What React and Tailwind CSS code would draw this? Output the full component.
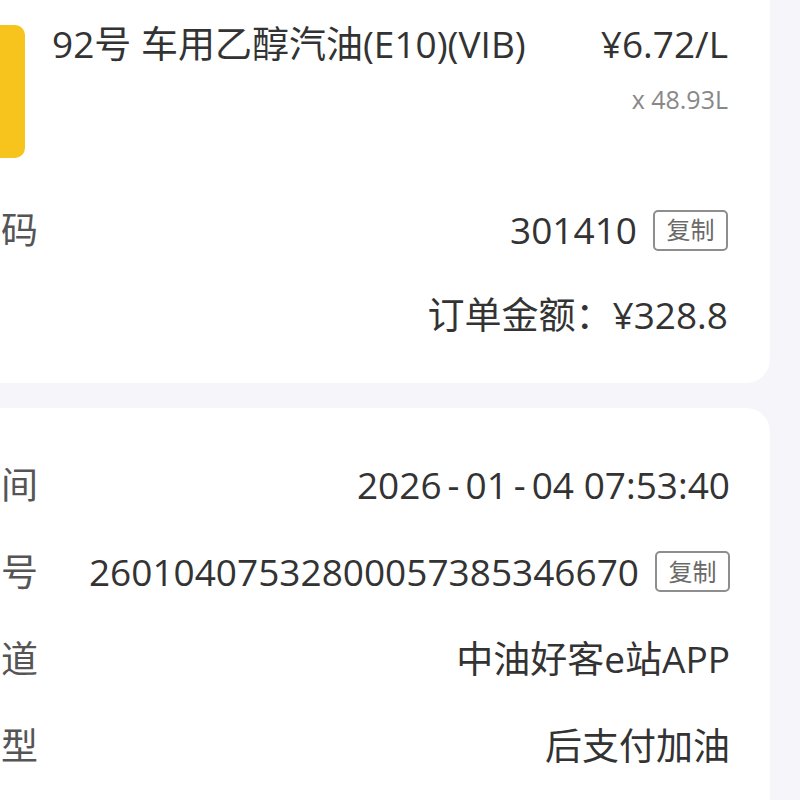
import React from "react";

function CopyBtn() {
  return (
    <span className="ml-[16px] inline-flex h-[41px] w-[75px] items-center justify-center rounded-[5px] border-2 border-[#8e8e8e] text-[24px] leading-none text-[#6a6a6a]">
      复制
    </span>
  );
}

function Row({ label, children, h = "h-[87px]" }) {
  return (
    <div className={`flex ${h} items-center justify-between`}>
      <span className="text-[#555]">{label}</span>
      <div className="flex items-center text-[#333]">{children}</div>
    </div>
  );
}

export default function App() {
  return (
    <div
      className="h-[800px] w-[800px] overflow-hidden bg-[#f6f6fa] font-normal"
      style={{ fontFamily: '"Open Sans", "Noto Sans CJK SC", sans-serif' }}
    >
      <div className="ml-[-144px] w-[914px] text-[37px] leading-[44px]">
        <div className="rounded-b-[24px] bg-white pb-[27px] pl-[34px] pr-[42px] pt-[25px]">
          <div className="flex items-start">
            <div className="h-[133px] w-[135px] shrink-0 rounded-[10px] bg-[#f6c41c]" />
            <div className="ml-[27px] mt-[-3px] flex-1 text-[#333]">92号 车用乙醇汽油(E10)(VIB)</div>
            <div className="mt-[-3px] flex flex-col items-end">
              <span className="text-[#333]">¥6.72/L</span>
              <span className="mt-[18px] text-[25px] leading-[30px] text-[#888]">x 48.93L</span>
            </div>
          </div>
          <div className="mt-[28px]">
            <Row label="加油卡码" h="h-[88px]">
              <span>301410</span>
              <CopyBtn />
            </Row>
          </div>
          <div className="flex h-[82px] items-center justify-end text-[#333]">订单金额：¥328.8</div>
        </div>

        <div className="mt-[25px] rounded-t-[24px] bg-white pb-[40px] pl-[34px] pr-[40px] pt-[33px]">
          <Row label="下单时间">
            <span>
              2026<span className="px-[6px]">-</span>01<span className="px-[6px]">-</span>04 07:53:40
            </span>
          </Row>
          <Row label="订单编号">
            <span>26010407532800057385346670</span>
            <CopyBtn />
          </Row>
          <Row label="支付渠道">
            <span>中油好客e站APP</span>
          </Row>
          <Row label="订单类型">
            <span>后支付加油</span>
          </Row>
        </div>
      </div>
    </div>
  );
}
